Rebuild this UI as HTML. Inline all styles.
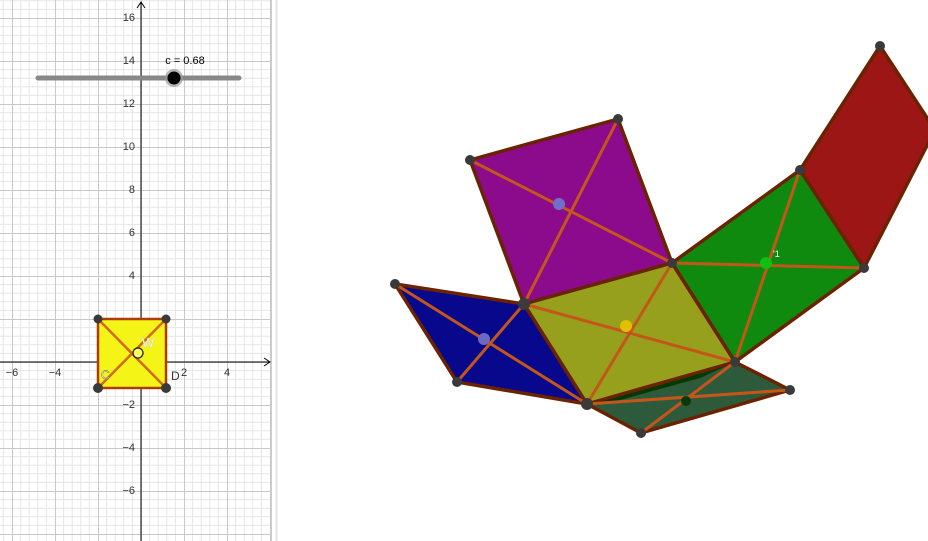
<!DOCTYPE html><html><head><meta charset="utf-8"><style>body{margin:0;background:#fff}svg{display:block}text{font-family:"Liberation Sans",sans-serif}</style></head><body>
<svg width="928" height="541" viewBox="0 0 928 541" xmlns="http://www.w3.org/2000/svg">
<defs>
<pattern id="g" x="141" y="362" width="43" height="43" patternUnits="userSpaceOnUse">
<g stroke="#e6e6e6" stroke-width="1">
<path d="M8.6 0V43M17.2 0V43M25.8 0V43M34.4 0V43M0 8.6H43M0 17.2H43M0 25.8H43M0 34.4H43"/></g>
<path d="M0.5 0V43M0 0.5H43" stroke="#c8c8c8"/>
</pattern></defs>
<rect x="0" y="0" width="271" height="541" fill="url(#g)"/>
<line x1="271.5" y1="0" x2="271.5" y2="541" stroke="#ccc"/>
<line x1="276.5" y1="0" x2="276.5" y2="541" stroke="#e4e4e4" stroke-width="2"/>
<!-- axes -->
<path d="M141 541V2M137 8L141 2L145 8M0 362H270M264 358L270 362L264 366" stroke="#000" fill="none" stroke-width="1"/>
<g font-size="11" fill="#333" text-anchor="end">
<text x="135" y="21">16</text><text x="135" y="64">14</text><text x="135" y="107">12</text><text x="135" y="150">10</text><text x="135" y="193">8</text><text x="135" y="236">6</text><text x="135" y="279">4</text><text x="135" y="408">−2</text><text x="135" y="451">−4</text><text x="135" y="494">−6</text>
</g>
<g font-size="11" fill="#333" text-anchor="middle"><text x="12" y="376">−6</text><text x="55" y="376">−4</text><text x="184" y="376">2</text><text x="227" y="376">4</text></g>
<!-- slider -->
<line x1="38" y1="78" x2="239" y2="78" stroke="#888" stroke-width="5" stroke-linecap="round"/>
<circle cx="174" cy="78" r="9" fill="#999" opacity=".7"/><circle cx="174" cy="78" r="6.5" fill="#000"/>
<text x="185" y="64" font-size="11" text-anchor="middle" fill="#000">c = 0.68</text>
<!-- yellow square -->
<rect x="98" y="319" width="68" height="69" fill="#f4f416" stroke="#b03a00" stroke-width="2.5"/>
<path d="M98 319L166 388M166 319L98 388" stroke="#d2691e" stroke-width="2.5"/>
<circle cx="138" cy="353" r="5" fill="#ffff60" stroke="#222" stroke-width="1.3"/>
<text x="142" y="347" font-size="13" fill="#fff" stroke="#ccc" stroke-width=".4">W</text>
<text x="101" y="379" font-size="12" fill="#fff" stroke="#555" stroke-width=".4">C</text>
<text x="171" y="380" font-size="12" fill="#333">D</text>
<g fill="#3a3a3a"><circle cx="98" cy="319" r="4.5"/><circle cx="166" cy="319" r="4.5"/><circle cx="98" cy="388" r="5"/><circle cx="166" cy="388" r="5"/></g>
<!-- 3D -->
<g stroke="#6b2200" stroke-width="3.5" stroke-linejoin="round">
<polygon points="880,46 935,130 864,268 800,170" fill="#9c1616"/>
<polygon points="587,404 735,362 790,390 641,433" fill="#2e5a3c"/>
<polygon points="587,404 735,362 700,378 620,400" fill="#003a00" stroke="none"/>
<polygon points="395,284 524,304 587,404 457,382" fill="#08088c"/>
<polygon points="470,160 618,119 672,263 524,304" fill="#8c0a8c"/>
<polygon points="672,263 800,170 864,268 735,362" fill="#0f8a0f"/>
<polygon points="524,304 672,263 735,362 587,404" fill="#96a01c"/>
</g>
<g stroke="#c4561a" stroke-width="3">
<path d="M470,160L672,263M618,119L524,304"/>
<path d="M395,284L587,404M524,304L457,382"/>
<path d="M524,304L735,362M672,263L587,404"/>
<path d="M672,263L864,268M800,170L735,362"/>
<path d="M587,404L790,390M735,362L641,433"/>
</g>
<circle cx="559" cy="204" r="6" fill="#7070cc"/>
<circle cx="484" cy="339" r="6" fill="#6a6ac0"/>
<circle cx="626" cy="326" r="6" fill="#e0c000"/>
<circle cx="766" cy="263" r="6" fill="#10c010"/>
<circle cx="686" cy="401" r="5" fill="#0a3a0a"/>
<text x="773" y="257" font-size="9" fill="#fff">'1</text>
<g fill="#3a3a3a"><circle cx="880" cy="46" r="5"/><circle cx="800" cy="170" r="5"/><circle cx="864" cy="268" r="5"/><circle cx="470" cy="160" r="5"/><circle cx="618" cy="119" r="5"/><circle cx="672" cy="263" r="5"/><circle cx="524" cy="304" r="6"/><circle cx="395" cy="284" r="5"/><circle cx="457" cy="382" r="5"/><circle cx="587" cy="404" r="6"/><circle cx="735" cy="362" r="5"/><circle cx="790" cy="390" r="5"/><circle cx="641" cy="433" r="5"/></g>
</svg>
</body></html>
